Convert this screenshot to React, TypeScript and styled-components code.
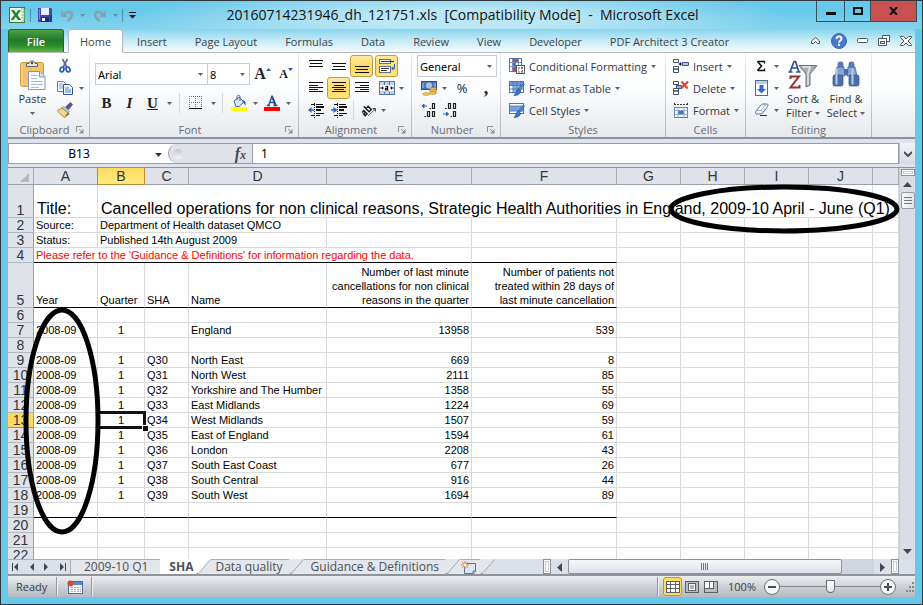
import React from "react";
import styled, { createGlobalStyle, css } from "styled-components";

const UI = '"Open Sans", "Noto Sans", sans-serif';
const TAHOMA = '"Noto Sans", "Open Sans", sans-serif';
const ARIAL = '"Liberation Sans", Arial, sans-serif';

const GlobalStyle = createGlobalStyle`
  *, *::before, *::after { box-sizing: border-box; }
  html, body { margin: 0; padding: 0; }
  body { background: #2d3338; font-family: ${UI}; font-size: 11px; color: #1e1e1e; overflow: hidden; }
  button, input, select { font: inherit; color: inherit; margin: 0; padding: 0; border: 0; background: none; outline: none; }
  button { display: flex; align-items: center; justify-content: center; white-space: nowrap; cursor: default; }
  svg { display: block; flex: none; }
`;

/* ---------- window frame ---------- */

const Window = styled.div`
  display: flex;
  flex-direction: column;
  height: 100vh;
  border: 1px solid #30363b;
  background: #67c9ea;
`;
const TitleBar = styled.header`
  display: grid;
  grid-template-columns: 1fr auto 1fr;
  flex: none;
  height: 28px;
  padding: 0 5px 0 7px;
  background:
    radial-gradient(ellipse 330px 30px at 50% 60%, rgba(200, 235, 247, 0.85) 30%, rgba(200, 235, 247, 0) 100%),
    linear-gradient(#67c9ea 40%, #86d4ee);
`;
const QuickAccess = styled.div`
  display: flex;
  align-items: center;
  height: 28px;
`;
const QuickButton = styled.button<{ $w: number }>`
  width: ${(p) => p.$w}px;
  height: 22px;
`;
const QuickSep = styled.span`
  width: 1px;
  height: 13px;
  margin: 0 4px;
  background: #4f8ea6;
`;
const WindowTitle = styled.h1`
  margin: 0;
  font-size: 14px;
  font-weight: 400;
  line-height: 28px;
  white-space: pre;
  color: #111;
`;
const WindowButtons = styled.div`
  display: flex;
  justify-self: end;
  height: 21px;
`;
const WindowButton = styled.button<{ $w: number; $close?: boolean }>`
  width: ${(p) => p.$w}px;
  border: 1px solid #33505c;
  border-top: 0;
  margin-left: -1px;
  background: ${(p) => (p.$close ? "#c75050" : "transparent")};
`;
const Client = styled.div`
  display: flex;
  flex: 1;
  flex-direction: column;
  min-height: 0;
  margin: 0 7px 7px;
`;

/* ---------- ribbon tabs ---------- */

const TabRow = styled.nav`
  display: flex;
  flex: none;
  height: 24px;
  border-bottom: 1px solid #b6bac0;
  background: linear-gradient(#86d4ee, #c6eaf6 50%, #f4fbfd);
`;
const FileTab = styled.button`
  width: 56px;
  height: 23px;
  margin-right: 4px;
  border: 1px solid #1c6a2a;
  border-bottom: 0;
  border-radius: 3px 3px 0 0;
  background: linear-gradient(#4fa046, #1f7a2c 45%, #2c8a2c 70%, #5cb83c);
  color: #fff;
  font-weight: 600;
`;
const RibbonTab = styled.button<{ $active?: boolean }>`
  height: 24px;
  padding: 0 13px;
  border: 1px solid transparent;
  color: #3f4347;
  ${(p) =>
    p.$active &&
    css`
      padding: 0 11px;
      border-color: #b6bac0;
      border-bottom-color: #fff;
      border-radius: 3px 3px 0 0;
      background: #fff;
    `}
`;
const TabTools = styled.div`
  display: flex;
  align-items: center;
  gap: 10px;
  margin-left: auto;
  padding-right: 3px;
`;

/* ---------- ribbon ---------- */

const Ribbon = styled.section`
  display: flex;
  flex: none;
  height: 86px;
  border-bottom: 2px solid #8d9197;
  background: linear-gradient(#fff, #fbfcfd 45%, #e6e9ed);
`;
const Group = styled.div<{ $w: number }>`
  display: flex;
  flex: none;
  flex-direction: column;
  width: ${(p) => p.$w}px;
  border-right: 1px solid;
  border-image: linear-gradient(#eceef0, #b0b4ba) 1;
`;
const GroupBody = styled.div<{ $pad?: number }>`
  display: flex;
  flex: 1;
  padding: 2px 0 0 ${(p) => p.$pad ?? 0}px;
`;
const GroupLabel = styled.div`
  display: flex;
  align-items: center;
  height: 16px;
  padding: 1px 5px 0;
  color: #696d74;
  span { flex: 1; text-align: center; }
`;
const Stack = styled.div<{ $top?: number; $gap?: number }>`
  display: flex;
  flex-direction: column;
  gap: ${(p) => p.$gap ?? 0}px;
  padding-top: ${(p) => p.$top ?? 0}px;
`;
const ToolRow = styled.div`
  display: flex;
  align-items: center;
  height: 22px;
`;
const Tool = styled.button<{ $w?: number; $on?: boolean }>`
  width: ${(p) => p.$w ?? 23}px;
  height: 22px;
  ${(p) =>
    p.$on &&
    css`
      border: 1px solid #c29b3c;
      border-radius: 3px;
      background: linear-gradient(#fde9a0, #fdd865 60%, #ffe67c);
    `}
`;
const ToolSep = styled.span<{ $mx?: number }>`
  width: 1px;
  height: 20px;
  margin: 0 ${(p) => p.$mx ?? 4}px;
  background: #d3d6da;
`;
const ToolGap = styled.span`
  width: 2px;
`;
const Percent = styled.span`
  font-size: 13px;
`;
const LabelTool = styled.button`
  gap: 4px;
  height: 22px;
  margin-left: -1px;
  color: #33373c;
`;
const BigTool = styled.button<{ $w: number }>`
  flex-direction: column;
  justify-content: flex-start;
  width: ${(p) => p.$w}px;
  padding-top: 2px;
  line-height: 14px;
  color: #33373c;
`;
const BigIcon = styled.span`
  display: flex;
  align-items: center;
  height: 35px;
`;
const LabelLine = styled.span`
  display: flex;
  align-items: center;
  gap: 3px;
  height: 14px;
`;
const Combo = styled.label<{ $w: number }>`
  display: grid;
  width: ${(p) => p.$w}px;
  height: 22px;
  margin-right: -1px;
  border: 1px solid #c9ccd1;
  background: #fff;
  select, svg { grid-area: 1 / 1; }
  select {
    width: 100%;
    padding: 0 14px 0 2px;
    appearance: none;
    color: #000;
    font-family: ${TAHOMA};
  }
  svg { align-self: center; justify-self: end; margin-right: 4px; pointer-events: none; }
`;
const Letter = styled.span<{ $size: number; $style?: "b" | "i" | "u" | "fx" }>`
  font-family: "Liberation Serif", serif;
  font-size: ${(p) => p.$size}px;
  font-weight: 700;
  line-height: 1;
  color: ${(p) => (p.$style === "fx" ? "#44484d" : "#222")};
  font-style: ${(p) => (p.$style === "i" || p.$style === "fx" ? "italic" : "normal")};
  text-decoration: ${(p) => (p.$style === "u" ? "underline" : "none")};
  small { font-size: 12px; }
`;

/* ---------- formula bar ---------- */

const FormulaBar = styled.section`
  display: flex;
  flex: none;
  height: 29px;
  padding: 4px 0 3px;
  background: #dfe3ee;
  border-bottom: 1px solid #8f949c;
`;
const FormulaField = styled.div`
  display: flex;
  flex: 1;
  min-width: 0;
  border: 1px solid #979ba8;
  background: #fff;
`;
const NameInput = styled.input`
  width: 140px;
  text-align: center;
  font-family: ${TAHOMA};
  font-size: 12px;
  color: #000;
`;
const FxPanel = styled.div`
  display: flex;
  align-items: center;
  justify-content: space-between;
  width: 85px;
  padding: 0 6px 0 2px;
  border: solid #979ba8;
  border-width: 0 1px 0 1px;
  border-radius: 10px 0 0 10px;
  background: #dfe3e8;
`;
const Knob = styled.span`
  width: 10px;
  height: 10px;
  margin-left: 2px;
  border-radius: 50%;
  background: linear-gradient(#c3c7cb, #f4f5f6);
`;
const FormulaInput = styled.input`
  flex: 1;
  min-width: 0;
  padding-left: 8px;
  font-family: ${TAHOMA};
  font-size: 12px;
  color: #000;
`;
const ExpandButton = styled.button`
  width: 16px;
  border-left: 1px solid #b9bdc5;
  background: linear-gradient(#f2f4f6, #d8dce2);
`;

/* ---------- sheet ---------- */

const SheetArea = styled.main`
  position: relative;
  display: flex;
  flex: 1;
  min-height: 0;
`;
const GridView = styled.div`
  flex: 1;
  min-width: 0;
  overflow: hidden;
  background: #fff;
`;
const Grid = styled.table`
  width: 100%;
  table-layout: fixed;
  border-collapse: separate;
  border-spacing: 0;
  font-family: ${ARIAL};
  font-size: 11px;
  color: #000;
`;
const ColHead = styled.th<{ $on?: boolean }>`
  height: 17px;
  padding: 0;
  border-right: 1px solid #a9adb4;
  border-bottom: 1px solid #9a9ea6;
  background: #dfe2e8;
  color: #33363b;
  font-size: 14px;
  font-weight: 400;
  line-height: 16px;
  ${(p) =>
    p.$on &&
    css`
      border-color: #c28a30;
      background: linear-gradient(#ffd961, #ffec7f);
      box-shadow: -1px 0 0 #c28a30;
    `}
`;
const Corner = styled.th`
  padding: 0 4px 2px 0;
  border-right: 1px solid #a9adb4;
  border-bottom: 1px solid #9a9ea6;
  background: #dfe2e8;
  vertical-align: bottom;
  svg { margin-left: auto; }
`;
const RowHead = styled.th<{ $h: number; $on?: boolean }>`
  height: ${(p) => p.$h}px;
  padding: 0;
  border-right: 1px solid #9a9ea6;
  border-bottom: 1px solid ${(p) => (p.$on ? "#c28a30" : "#b3b7be")};
  background: ${(p) => (p.$on ? "#ffd85f" : "#dfe2e8")};
  color: #33363b;
  font-size: 14px;
  font-weight: 400;
  line-height: 14px;
  vertical-align: bottom;
`;
const Cell = styled.td<{
  $align?: "left" | "center" | "right";
  $line?: boolean;
  $red?: boolean;
  $big?: boolean;
  $selected?: boolean;
}>`
  padding: 0 2px;
  border-right: 1px solid #d9dadc;
  border-bottom: 1px solid ${(p) => (p.$line ? "#000" : "#d9dadc")};
  text-align: ${(p) => p.$align ?? "left"};
  vertical-align: bottom;
  white-space: pre;
  line-height: ${(p) => (p.$big ? 16 : 14)}px;
  color: ${(p) => (p.$red ? "#f00" : "#000")};
  ${(p) => p.$big && css`padding: 0 3px 0; font-size: 16px;`}
  ${(p) =>
    p.$selected &&
    css`
      position: relative;
      &::before {
        content: "";
        position: absolute;
        inset: -2px -2px -2px -2px;
        border: 3px solid #111;
      }
      &::after {
        content: "";
        position: absolute;
        right: -4px;
        bottom: -4px;
        width: 6px;
        height: 6px;
        border: solid #fff;
        border-width: 1px 0 0 1px;
        background: #111;
      }
    `}
`;
const VScroll = styled.div`
  display: flex;
  flex: none;
  flex-direction: column;
  align-items: center;
  width: 16px;
  padding-top: 1px;
  background: #d9dde5;
  border-left: 1px solid #c9cdd5;
`;
const SplitHandle = styled.span<{ $vertical?: boolean }>`
  flex: none;
  width: ${(p) => (p.$vertical ? 8 : 14)}px;
  height: ${(p) => (p.$vertical ? 15 : 7)}px;
  border: 1px solid #8b8f96;
  background: #fff;
  box-shadow: inset 0 0 0 1px #fff, inset 0 0 0 2px #c7cad0;
`;
const ScrollButton = styled.button`
  flex: none;
  width: 17px;
  height: 16px;
`;
const VThumb = styled.div`
  display: flex;
  align-items: center;
  justify-content: center;
  width: 14px;
  height: 17px;
  margin-bottom: auto;
  border: 1px solid #999da5;
  border-radius: 2px;
  background: linear-gradient(90deg, #f7f8fa, #dfe3e9);
`;
const Annotation = styled.svg`
  position: absolute;
  inset: 0;
  width: 100%;
  height: 100%;
  overflow: visible;
  pointer-events: none;
`;

/* ---------- sheet tabs ---------- */

const BottomRow = styled.div`
  display: flex;
  flex: none;
  height: 17px;
  border-bottom: 2px solid #8f949b;
  background: #dce0e8;
`;
const SheetNav = styled.div`
  display: flex;
  width: 63px;
  border-top: 1px solid #a9adb4;
  border-right: 1px solid #a9adb4;
  button { flex: 1; }
`;
const SheetTab = styled.button<{ $active?: boolean; $padL: number; $padR: number }>`
  padding: 0 ${(p) => p.$padR}px 0 ${(p) => p.$padL}px;
  border-top: 1px solid ${(p) => (p.$active ? "#fff" : "#a9adb4")};
  background: ${(p) => (p.$active ? "#fff" : "#e3e6eb")};
  font-size: 12px;
  line-height: 14px;
  font-weight: ${(p) => (p.$active ? 700 : 400)};
  color: #4c5056;
`;
const HScroll = styled.div`
  display: flex;
  align-items: stretch;
  width: 356px;
  margin: 0 16px 0 auto;
`;
const HTrack = styled.div`
  flex: 1;
  padding-right: 32px;
  background: #cfd4de;
`;
const HThumb = styled.div`
  display: flex;
  align-items: center;
  justify-content: center;
  height: 15px;
  border: 1px solid #8e939b;
  border-radius: 2px;
  background: linear-gradient(#f6f8fa, #dde1e8);
`;

/* ---------- status bar ---------- */

const StatusBar = styled.footer`
  display: flex;
  flex: none;
  align-items: center;
  height: 21px;
  padding-left: 8px;
  background: linear-gradient(#eceef0, #cdd1d6 50%, #b5b9c0);
  color: #3b3f44;
`;
const StatusSep = styled.span`
  width: 2px;
  height: 19px;
  border-left: 1px solid #94989f;
  background: #eceef1;
`;
const StatusItem = styled.span<{ $w: number }>`
  width: ${(p) => p.$w}px;
`;
const ViewButton = styled.button<{ $on?: boolean }>`
  width: 19px;
  height: 19px;
  ${(p) =>
    p.$on &&
    css`
      border: 1px solid #c0942e;
      border-radius: 3px;
      background: #fddc6c;
    `}
`;
const StatusRight = styled.div`
  display: flex;
  align-items: center;
  margin-left: auto;
`;
const ZoomRange = styled.input`
  width: 100px;
  height: 16px;
  appearance: none;
  background: linear-gradient(#83878e, #83878e) center / 100% 1px no-repeat;
  &::-webkit-slider-thumb {
    appearance: none;
    width: 9px;
    height: 13px;
    border: 1px solid #676b72;
    border-radius: 1px 1px 5px 5px;
    background: linear-gradient(#fff, #e2e4e8);
  }
`;

/* ---------- icons ---------- */

const Down = ({ c = "#5e6267", w = 5 }: { c?: string; w?: number }) => (
  <svg width={w} height={w === 5 ? 3 : 4} viewBox="0 0 5 3" aria-hidden="true">
    <path d="M0 0h5L2.5 3z" fill={c} />
  </svg>
);
const Svg = ({ w = 16, h = 16, children }: { w?: number; h?: number; children: React.ReactNode }) => (
  <svg width={w} height={h} viewBox={`0 0 ${w} ${h}`} fill="none" aria-hidden="true">
    {children}
  </svg>
);

const ExcelIcon = () => (
  <Svg>
    <rect x=".5" y=".5" width="15" height="15" fill="#f3faf0" stroke="#2c8338" />
    <path d="M12 2h3v12h-3M12 5h3M12 8h3M12 11h3" stroke="#8cc48d" />
    <path d="M2 3h3l2 3.2L9.400 3H12L8.600 8l3.600 5H9L6.800 9.700 4.400 13H1.500L5.300 8z" fill="#218235" />
  </Svg>
);
const SaveIcon = () => (
  <Svg w={14} h={14}>
    <path d="M0 0h13l1 1v13H0z" fill="#4348b4" />
    <rect x="3" y="0" width="8" height="7" fill="#e8effa" />
    <rect x="1" y="1" width="1" height="10" fill="#7e86d8" />
    <rect x="3" y="9" width="8" height="5" fill="#23286f" />
    <rect x="4" y="10" width="3" height="3" fill="#fff" />
    <rect x="12" y="7" width="2" height="7" fill="#2e3384" />
  </Svg>
);
const UndoIcon = ({ flip }: { flip?: boolean }) => (
  <Svg w={13} h={13}>
    <g transform={flip ? "matrix(-1 0 0 1 13 0)" : undefined}>
      <path d="M3 5.500C6 1.500 11 2.200 11 6c0 2.500-2 4-4.500 6" stroke="#85a3b1" strokeWidth="2.600" />
      <path d="M0 1v7h7z" fill="#85a3b1" />
    </g>
  </Svg>
);
const CustomizeIcon = () => (
  <Svg w={7} h={7}>
    <path d="M0 .5h7" stroke="#111" />
    <path d="M0 3h7L3.500 6.500z" fill="#111" />
  </Svg>
);
const PasteIcon = () => (
  <Svg w={28} h={32}>
    <rect x="1.500" y="3.500" width="23" height="24" rx="2" fill="#f3c168" stroke="#cf9a45" />
    <path d="M3 5v21" stroke="#f9dda2" />
    <path d="M7.500 4.500h2.500C10 1 16 1 16 4.500h2.500v3h-11z" fill="#e2e4e8" stroke="#5f646b" />
    <circle cx="13" cy="4" r="1.200" fill="#4b5057" />
    <path d="M9.500 12.500H21l5 5V30.500H9.500z" fill="#fdfeff" stroke="#8795ad" />
    <path d="M20.500 12.500v5.500H26" fill="#d6e0f0" stroke="#8795ad" />
    <path d="M12 16.500h7M12 19.500h6M12 22.500h12M12 25.500h12M12 28.500h8" stroke="#a5bad8" />
  </Svg>
);
const CutIcon = () => (
  <Svg>
    <path d="M5.500 1l4.500 8.500M10.500 1L6 9.500" stroke="#5c6f91" strokeWidth="1.700" />
    <ellipse cx="5" cy="11.500" rx="1.900" ry="2.500" stroke="#2b5fb8" strokeWidth="1.700" transform="rotate(20 5 11.500)" />
    <ellipse cx="11" cy="11.500" rx="1.900" ry="2.500" stroke="#2b5fb8" strokeWidth="1.700" transform="rotate(-20 11 11.500)" />
  </Svg>
);
const CopyIcon = () => (
  <Svg>
    <path d="M.500 1.500h6l2 2v8h-8z" fill="#f4f8ff" stroke="#5d80bb" />
    <path d="M2 4h4M2 6h5M2 8h5" stroke="#7c9fd6" />
    <path d="M6.500 4.500h6l3 3v7H6.500z" fill="#f4f8ff" stroke="#2f5599" />
    <path d="M8 8h4M8 10h6M8 12h6" stroke="#4d7cc4" />
  </Svg>
);
const PainterIcon = () => (
  <Svg>
    <path d="M13.500.500l2 2-4 5-3-2.500z" fill="#5a4f9c" stroke="#3b3575" strokeWidth=".6" />
    <path d="M6.500 4.500l6 5-1.500 1.500-6-5z" fill="#c9ccd6" stroke="#6b6f7c" strokeWidth=".6" />
    <path d="M5 6l6 5-3 4.500C5 14 2 11.500.500 8.500z" fill="#f2da84" stroke="#8a6a1c" strokeWidth=".7" />
    <path d="M8 15l3-4 1.500 1z" fill="#6a4c12" />
  </Svg>
);
const LauncherIcon = () => (
  <Svg w={8} h={8}>
    <path d="M.500 6V.500H6" stroke="#8b8f96" />
    <path d="M3 3l3 3" stroke="#8b8f96" />
    <path d="M7.500 3v4.500H3z" fill="#8b8f96" />
  </Svg>
);
const SizeMark = ({ up }: { up?: boolean }) => (
  <Svg w={5} h={15}>
    <path d={up ? "M0 4h5L2.500 1z" : "M0 1h5L2.500 4z"} fill="#2b5aa5" />
  </Svg>
);
const BorderIcon = () => (
  <Svg w={14} h={14}>
    <path d="M0 .500h13M0 6.500h13M.500 0v12M6.500 0v12M12.500 0v12" stroke="#6b6f75" strokeDasharray="1 1" />
    <path d="M0 12.500h13" stroke="#111" />
  </Svg>
);
const FillIcon = () => (
  <Svg w={16} h={16}>
    <path d="M3 6l5-4 5 5-5 4.500H5z" fill="#dbe6f5" stroke="#46648f" />
    <path d="M6 5V1.500C6 0 9 0 9 1.500V6" stroke="#46648f" />
    <path d="M12 5c2.500.500 3 2.500 2.500 6-1-2.500-2-3-3-3z" fill="#2c66b8" />
    <rect y="12" width="16" height="4" fill="#ff0" />
  </Svg>
);
const FontColorIcon = () => (
  <Svg w={16} h={16}>
    <path d="M3 10.500h3M9.500 10.500h4M4.500 10.500L8 1.500l4 9M5.500 7.500h5" stroke="#2f4f8c" strokeWidth="1.400" />
    <path d="M8 1l3.500 9.500" stroke="#2f4f8c" strokeWidth="2" />
    <rect y="12" width="16" height="4" fill="#f00" />
  </Svg>
);
const LinesIcon = ({ rows }: { rows: [number, number][] }) => (
  <Svg w={16} h={16}>
    {rows.map(([x, w], i) => (
      <rect key={i} x={x} y={2 + i * 2 + (i > 0 ? 1 : 0)} width={w} height="1" fill="#111" />
    ))}
  </Svg>
);
const VAlignIcon = ({ y }: { y: number }) => (
  <Svg w={16} h={16}>
    <path d={`M1 ${y}.5h14M2 ${y + 3}.5h12M1 ${y + 6}.5h14`} stroke="#111" />
  </Svg>
);
const WrapIcon = () => (
  <Svg w={18} h={18}>
    <rect x="1.500" y="2.500" width="11" height="4" fill="#fff" stroke="#5a7398" />
    <path d="M3 4.500h13" stroke="#333" />
    <rect x="1.500" y="9.500" width="11" height="6" fill="#fff" stroke="#5a7398" />
    <path d="M3 11.500h8M3 13.500h6" stroke="#333" />
    <path d="M16.500 7v4.500h-2" stroke="#2a66c0" />
    <path d="M15.500 9.500v4l-2.500-2z" fill="#2a66c0" />
  </Svg>
);
const MergeIcon = () => (
  <Svg>
    <rect x=".5" y="1.500" width="15" height="13" fill="#bdd3ef" stroke="#5675a4" />
    <path d="M5.500 2v3M10.500 2v3M5.500 12v3M10.500 12v3" stroke="#5675a4" />
    <rect x="1" y="5" width="14" height="6" fill="#fff" />
    <path d="M1 8h3M12 8h3" stroke="#222" />
    <path d="M3 6l2 2-2 2zM13 6l-2 2 2 2z" fill="#222" />
    <path d="M6.500 6.500h2v3.500h-2V8.300h2M9.500 10h-1" stroke="#111" strokeWidth="1.200" />
  </Svg>
);
const IndentIcon = ({ right }: { right?: boolean }) => (
  <Svg>
    <path d="M3 2.500h4M8 2.500h7M8 5.500h8M8 8.500h5M8 11.500h8M3 13.500h4M8 13.500h4" stroke="#111" />
    <path d="M8 4.500h8M8 7.500h5" stroke="#111" />
    <path d="M6.500 1v15" stroke="#111" strokeDasharray="1 1" />
    <path d={right ? "M0 8h4" : "M2 8h4"} stroke="#2a66c0" strokeWidth="1.500" />
    <path d={right ? "M2.500 5l4 3-4 3z" : "M3.500 5L0 8l3.500 3z"} fill="#2a66c0" />
  </Svg>
);
const OrientIcon = () => (
  <Svg w={16} h={14}>
    <g transform="rotate(-45 6 8)">
      <path d="M1.500 5.500h2.500V10H1.500V7.700H4M7 2.500V10h3V5.500H7" stroke="#222" strokeWidth="1.500" />
    </g>
    <path d="M7 13l6-6" stroke="#777" />
    <path d="M15 5v4l-4-4z" fill="#555" />
  </Svg>
);
const CurrencyIcon = () => (
  <Svg>
    <rect x=".5" y="1.500" width="15" height="8" fill="#4a77b8" stroke="#2c4f86" />
    <ellipse cx="8" cy="5.500" rx="3" ry="3" fill="#a9c5ea" />
    <path d="M2 3v5M14 3v5" stroke="#a9c5ea" />
    <ellipse cx="12" cy="9" rx="3.500" ry="1.300" fill="#f6cf62" stroke="#a5751a" strokeWidth=".6" />
    <ellipse cx="12" cy="11" rx="3.500" ry="1.300" fill="#f6cf62" stroke="#a5751a" strokeWidth=".6" />
    <ellipse cx="12" cy="13" rx="3.500" ry="1.300" fill="#f6cf62" stroke="#a5751a" strokeWidth=".6" />
    <ellipse cx="5" cy="14" rx="3.500" ry="1.300" fill="#f6cf62" stroke="#a5751a" strokeWidth=".6" />
  </Svg>
);
const DecimalIcon = ({ less }: { less?: boolean }) => (
  <Svg>
    <g stroke="#222" strokeWidth="1.200">
      {less ? (
        <>
          <path d="M2 6.500h1.500M5.500 1.500h2v5h-2zM10.500 1.500h2v5h-2z" />
          <path d="M7.500 14.500H9M10.500 9.500h2v5h-2z" />
        </>
      ) : (
        <>
          <path d="M8.500 6.500H10M11.500 1.500h2v5h-2z" />
          <path d="M3.500 14.500H5M6.500 9.500h2v5h-2zM11.500 9.500h2v5h-2z" />
        </>
      )}
    </g>
    {less ? (
      <path d="M0 12h4M3.500 10L5.500 12l-2 2z" fill="#2a66c0" stroke="#2a66c0" />
    ) : (
      <path d="M6 4H3M3 2L1 4l2 2z" fill="#2a66c0" stroke="#2a66c0" />
    )}
  </Svg>
);
const CondFormatIcon = () => (
  <Svg>
    <rect x=".5" y=".5" width="12" height="13" fill="#fff" stroke="#4f76b3" />
    <rect x="4" y="1" width="5" height="3" fill="#d9442f" />
    <rect x="4" y="5" width="3" height="3" fill="#4c7ac0" />
    <rect x="4" y="9" width="4" height="4" fill="#d9442f" />
    <path d="M1 4.500h11M1 8.500h8M3.500 1v12M9.500 1v6" stroke="#6d90c6" />
    <rect x="7.500" y="7.500" width="8" height="8" fill="#fff" stroke="#555" />
    <path d="M9 10h2M9 12h1M9 14h2M12 9l2 1-2 1M14 12l-2 2h2" stroke="#333" strokeWidth=".8" />
  </Svg>
);
const Brush = () => (
  <>
    <path d="M15.500 4l-4 6-2-1.500L14.500 3.500z" fill="#5b8bd0" stroke="#2e5a9c" strokeWidth=".7" />
    <path d="M9 9l2.500 2c-.500 3.500-3 4.500-6.500 4.500C7 14 7 10.500 9 9z" fill="#3c76cc" stroke="#234f92" strokeWidth=".7" />
  </>
);
const TableFormatIcon = () => (
  <Svg>
    <rect x=".5" y="1.500" width="14" height="11" fill="#fff" stroke="#4f76b3" />
    <rect x="4" y="5" width="7" height="7" fill="#8fb4e8" />
    <rect x="1" y="2" width="13" height="3" fill="#6d98d8" />
    <path d="M.500 5.500h14M.500 9h14M4 2v11M8 2v11M11.500 2v11" stroke="#4f76b3" strokeWidth=".9" />
    <Brush />
  </Svg>
);
const CellStyleIcon = () => (
  <Svg>
    <rect x=".5" y="1.500" width="14" height="10" fill="#fff" stroke="#4f76b3" />
    <rect x="1" y="4" width="13" height="5" fill="#77a0e0" />
    <path d="M.500 4h14M.500 9h14" stroke="#4f76b3" strokeWidth=".9" />
    <Brush />
  </Svg>
);
const InsertCellsIcon = ({ del }: { del?: boolean }) => (
  <Svg>
    <path d="M.500 1.500h5v3h-5zM.500 8.500h5v2.500h-5zM.500 11h5v3.500h-5z" fill="#fff" stroke="#3f4f6b" />
    {del ? (
      <>
        <path d="M3.500 5.500h5v3h-5z" fill="#8fb4e8" stroke="#3f4f6b" />
        <path d="M8.500 1.500l6 7M15 1.500l-7 7" stroke="#e2432c" strokeWidth="2" />
      </>
    ) : (
      <>
        <path d="M9.500 4.500h6v3h-6z" fill="#a9c7f0" stroke="#33548c" />
        <path d="M7 6h2" stroke="#111" />
        <path d="M8 4v4L5.500 6z" fill="#111" />
      </>
    )}
  </Svg>
);
const FormatCellsIcon = () => (
  <Svg>
    <path d="M1 2.500h14M1.500 1v3M14.500 1v3" stroke="#333" strokeDasharray="2 1" />
    <rect x="1.500" y="5.500" width="13" height="10" fill="#fff" stroke="#5a7fba" />
    <rect x="5" y="8" width="6" height="4" fill="#3f74c4" />
    <path d="M1 8.500h14M1 12.500h14M5 5v10M11 5v10" stroke="#8aa9d8" />
  </Svg>
);
const SigmaIcon = () => (
  <Svg w={11} h={12}>
    <path d="M1.500 1.500h7v2M1.500 10.500h7v-2" stroke="#111" strokeWidth="1.300" />
    <path d="M1.500 1.500l4 4.500-4 4.500" stroke="#111" strokeWidth="1.600" />
  </Svg>
);
const FillDownIcon = () => (
  <Svg w={13} h={16}>
    <rect x=".5" y=".5" width="12" height="15" fill="#fff" stroke="#55698c" />
    <rect x="1" y="1" width="11" height="3" fill="#b7cdee" />
    <path d="M4.500 5h4v4H11l-4.500 4.500L2 9h2.500z" fill="#2f6bd0" />
  </Svg>
);
const EraserIcon = () => (
  <Svg w={16} h={14}>
    <path d="M6.500 2.500C7 1.500 8 1 9 1h3.500c1.500 0 2 1 1 2.500L9 9.500c-.800 1-1.500 1.500-3 1.500H3C1.500 11 1 9.500 2 8z" fill="#fafbff" stroke="#4f6fa8" />
    <path d="M2.500 7.500h4.500c1 0 1.500 1 1 2.500M7 7.500l5-6" stroke="#9db3dc" />
    <path d="M6 12.500h7" stroke="#333" />
  </Svg>
);
const SortIcon = () => (
  <Svg w={30} h={30}>
    <path d="M2 12L6 1.500h1.500L11 12M4 8h6M.500 12h4M8 12h4.500" stroke="#2c5296" strokeWidth="1.700" />
    <path d="M2.500 19v-2.500H11L2.500 27.500h9V25" stroke="#9b2c2c" strokeWidth="2" />
    <path d="M11 5.500h18l-7 8.500v11l-4 2V14z" fill="#a9adb3" stroke="#6c7076" />
    <path d="M14 7h8l-2 6v12" stroke="#e8eaec" strokeWidth="1.500" />
  </Svg>
);
const FindIcon = () => (
  <Svg w={28} h={28}>
    <rect x="6" y="1" width="5" height="6" rx="2" fill="#5d7fb5" stroke="#34548c" strokeWidth=".7" />
    <rect x="17" y="1" width="5" height="6" rx="2" fill="#5d7fb5" stroke="#34548c" strokeWidth=".7" />
    <path d="M5 6h7l1 9H3z" fill="#86a5d3" stroke="#34548c" strokeWidth=".7" />
    <path d="M16 6h7l2 9H15z" fill="#86a5d3" stroke="#34548c" strokeWidth=".7" />
    <rect x="12" y="8" width="4" height="6" fill="#4c70ad" />
    <rect x="1" y="14" width="10" height="11" rx="2" fill="#4c70ad" stroke="#2c4a80" strokeWidth=".7" />
    <rect x="17" y="14" width="10" height="11" rx="2" fill="#4c70ad" stroke="#2c4a80" strokeWidth=".7" />
    <path d="M4.500 7.500v16M20.500 7.500v16" stroke="#b9cdeb" strokeWidth="2" />
  </Svg>
);
const CollapseIcon = () => (
  <Svg w={11} h={9}>
    <path d="M1.500 5l4-3.500 4 3.500v2.500h-2l-2-2-2 2h-2z" fill="#fff" stroke="#50565c" />
  </Svg>
);
const HelpIcon = () => (
  <Svg>
    <circle cx="8" cy="8" r="7.500" fill="#4a78cb" stroke="#3c65b0" />
    <path d="M5.500 6c0-3.500 5-3.300 5-.300C10.500 7.500 8 7.500 8 9.800" stroke="#fff" strokeWidth="1.800" />
    <rect x="7" y="11" width="2" height="2" fill="#fff" />
  </Svg>
);
const MinIcon = () => (
  <Svg w={11} h={5}>
    <rect x=".5" y=".5" width="10" height="4" rx="1" fill="#fff" stroke="#50565c" />
  </Svg>
);
const RestoreIcon = () => (
  <Svg w={12} h={11}>
    <path d="M4.500.500h7v6h-3v-3h-4z" fill="#fff" stroke="#50565c" />
    <path d="M.500 3.500h8v7h-8z" fill="#fff" stroke="#50565c" />
    <rect x="2.500" y="6.500" width="4" height="2" stroke="#50565c" />
  </Svg>
);
const CloseIcon = () => (
  <Svg w={12} h={10}>
    <path d="M.500.500h3L6 3l2.500-2.500h3v1L8 5l3.500 3.500v1h-3L6 7 3.500 9.500h-3v-1L4 5 .500 1.500z" fill="#fff" stroke="#50565c" />
  </Svg>
);
const NavIcon = ({ d, bar }: { d: "l" | "r"; bar?: boolean }) => (
  <Svg w={7} h={8}>
    <path d={d === "l" ? "M6 0v8L2 4z" : "M1 0v8l4-4z"} fill="#43474d" />
    {bar && <path d={d === "l" ? "M.500 0v8" : "M6.500 0v8"} stroke="#43474d" />}
  </Svg>
);
const ScrollArrow = ({ d }: { d: "l" | "r" | "u" | "d" }) => {
  const paths = { l: "M5 0v9L0 4.500z", r: "M0 0v9l5-4.500z", u: "M0 5h9L4.500 0z", d: "M0 0h9L4.500 5z" };
  const side = d === "l" || d === "r";
  return (
    <Svg w={side ? 5 : 9} h={side ? 9 : 5}>
      <path d={paths[d]} fill="#43474d" />
    </Svg>
  );
};
const Slant = ({ l, r }: { l: string; r: string }) => (
  <Svg w={15} h={15}>
    <path d="M0 0h15L3 15H0z" fill={l} />
    <path d="M15 0v15H3z" fill={r} />
    <path d="M14.500.500L2 15" stroke="#a2a6ad" />
    <path d="M0 15l2-2v2z" fill="#a2a6ad" />
  </Svg>
);
const NewSheetIcon = () => (
  <Svg w={16} h={13}>
    <path d="M3.500 2.500h11v8l-2 2h-9z" fill="#dbe7f8" stroke="#5674a8" />
    <path d="M14 10h-2v3" stroke="#5674a8" />
    <path d="M4 0v8M0 4h8M1.200 1.200l5.600 5.600M6.800 1.200L1.200 6.800" stroke="#d98a20" />
    <circle cx="4" cy="4" r="1.400" fill="#fff" />
  </Svg>
);
const MacroIcon = () => (
  <Svg w={16} h={14}>
    <rect x="1.500" y="1.500" width="14" height="12" fill="#fff" stroke="#4a6ba6" />
    <rect x="2" y="2" width="13" height="3" fill="#5d87cc" />
    <path d="M4 7.500h10M4 9.500h10M4 11.500h10" stroke="#8ea9d2" strokeDasharray="2 1" />
    <circle cx="3.500" cy="3.500" r="3" fill="#d8492c" />
  </Svg>
);
const ViewIcon = ({ kind }: { kind: "grid" | "page" | "break" }) => (
  <Svg w={14} h={12}>
    <rect x=".5" y=".5" width="13" height="11" fill={kind === "grid" ? "#fff" : "#b9bcc1"} stroke="#5b5f65" />
    {kind === "grid" && <path d="M1 3.500h12M1 7.500h12M4.500 1v10M9.500 1v10" stroke="#5b5f65" />}
    {kind === "page" && (
      <>
        <rect x="3.500" y="2.500" width="7" height="7" fill="#fff" stroke="#5b5f65" />
        <path d="M5 5h4M5 7h4" stroke="#5b5f65" />
      </>
    )}
    {kind === "break" && (
      <>
        <path d="M1 1h4v6H1zM6 1h3v6H6z" fill="#fff" />
        <path d="M5.500 1v6M9.500 1v6M1 7.500h9" stroke="#5b5f65" />
      </>
    )}
  </Svg>
);
const RoundIcon = ({ plus }: { plus?: boolean }) => (
  <Svg>
    <circle cx="8" cy="8" r="7.500" fill="#f4f5f6" stroke="#6b6f76" />
    <path d={plus ? "M4 8h8M8 4v8" : "M4 8h8"} stroke="#4a4e54" strokeWidth="2" />
  </Svg>
);

/* ---------- data ---------- */

type Row = { n: number; year?: string; q?: string; sha?: string; name?: string; a?: string; b?: string };
const rows: Row[] = [
  { n: 6 },
  { n: 7, year: "2008-09", q: "1", name: "England", a: "13958", b: "539" },
  { n: 8 },
  { n: 9, year: "2008-09", q: "1", sha: "Q30", name: "North East", a: "669", b: "8" },
  { n: 10, year: "2008-09", q: "1", sha: "Q31", name: "North West", a: "2111", b: "85" },
  { n: 11, year: "2008-09", q: "1", sha: "Q32", name: "Yorkshire and The Humber", a: "1358", b: "55" },
  { n: 12, year: "2008-09", q: "1", sha: "Q33", name: "East Midlands", a: "1224", b: "69" },
  { n: 13, year: "2008-09", q: "1", sha: "Q34", name: "West Midlands", a: "1507", b: "59" },
  { n: 14, year: "2008-09", q: "1", sha: "Q35", name: "East of England", a: "1594", b: "61" },
  { n: 15, year: "2008-09", q: "1", sha: "Q36", name: "London", a: "2208", b: "43" },
  { n: 16, year: "2008-09", q: "1", sha: "Q37", name: "South East Coast", a: "677", b: "26" },
  { n: 17, year: "2008-09", q: "1", sha: "Q38", name: "South Central", a: "916", b: "44" },
  { n: 18, year: "2008-09", q: "1", sha: "Q39", name: "South West", a: "1694", b: "89" },
  { n: 19 },
  { n: 20 },
  { n: 21 },
  { n: 22 },
];
const columns = ["A", "B", "C", "D", "E", "F", "G", "H", "I", "J"];
const widths = [26, 64, 47, 44, 138, 145, 145, 64, 64, 64, 64];
const tabs = ["Home", "Insert", "Page Layout", "Formulas", "Data", "Review", "View", "Developer", "PDF Architect 3 Creator"];
const Blank = ({ count }: { count: number }) => (
  <>
    {Array.from({ length: count }, (_, i) => (
      <Cell key={i} />
    ))}
  </>
);

const Label = ({ text, launcher }: { text: string; launcher?: boolean }) => (
  <GroupLabel>
    <span>{text}</span>
    {launcher && (
      <button aria-label={`${text} options`}>
        <LauncherIcon />
      </button>
    )}
  </GroupLabel>
);
const Menu = ({ icon, text }: { icon: React.ReactNode; text: string }) => (
  <LabelTool>
    {icon}
    {text}
    <Down />
  </LabelTool>
);

/* ---------- app ---------- */

const RibbonBar = () => (
  <Ribbon>
    <Group $w={82}>
      <GroupBody $pad={6}>
        <BigTool $w={37}>
          <BigIcon>
            <PasteIcon />
          </BigIcon>
          <LabelLine>Paste</LabelLine>
          <LabelLine>
            <Down />
          </LabelLine>
        </BigTool>
        <Stack>
          <ToolRow>
            <Tool $w={28} aria-label="Cut"><CutIcon /></Tool>
          </ToolRow>
          <ToolRow>
            <Tool $w={28} aria-label="Copy"><CopyIcon /></Tool>
            <Tool $w={5} aria-label="Copy options"><Down /></Tool>
          </ToolRow>
          <ToolRow>
            <Tool $w={28} aria-label="Format Painter"><PainterIcon /></Tool>
          </ToolRow>
        </Stack>
      </GroupBody>
      <Label text="Clipboard" launcher />
    </Group>

    <Group $w={209}>
      <GroupBody $pad={5}>
        <Stack $top={8} $gap={7}>
          <ToolRow>
            <Combo $w={113}>
              <select aria-label="Font"><option>Arial</option></select>
              <Down />
            </Combo>
            <Combo $w={43}>
              <select aria-label="Font size"><option>8</option></select>
              <Down />
            </Combo>
            <Tool $w={27} aria-label="Grow Font"><Letter $size={16}>A</Letter><SizeMark up /></Tool>
            <Tool $w={20} aria-label="Shrink Font"><Letter $size={12}>A</Letter><SizeMark /></Tool>
          </ToolRow>
          <ToolRow>
            <Tool aria-label="Bold"><Letter $size={15}>B</Letter></Tool>
            <Tool aria-label="Italic"><Letter $size={15} $style="i">I</Letter></Tool>
            <Tool aria-label="Underline"><Letter $size={15} $style="u">U</Letter></Tool>
            <Tool $w={11} aria-label="Underline options"><Down /></Tool>
            <ToolSep />
            <Tool $w={24} aria-label="Borders"><BorderIcon /></Tool>
            <Tool $w={10} aria-label="Border options"><Down /></Tool>
            <ToolSep />
            <Tool $w={24} aria-label="Fill Color"><FillIcon /></Tool>
            <Tool $w={9} aria-label="Fill options"><Down /></Tool>
            <Tool $w={24} aria-label="Font Color"><FontColorIcon /></Tool>
            <Tool $w={9} aria-label="Font color options"><Down /></Tool>
          </ToolRow>
        </Stack>
      </GroupBody>
      <Label text="Font" launcher />
    </Group>

    <Group $w={113}>
      <GroupBody $pad={5}>
        <Stack>
          <ToolRow>
            <Tool aria-label="Top Align"><VAlignIcon y={2} /></Tool>
            <Tool aria-label="Middle Align"><VAlignIcon y={5} /></Tool>
            <Tool $on aria-label="Bottom Align"><VAlignIcon y={8} /></Tool>
            <ToolGap />
            <Tool $on aria-label="Wrap Text"><WrapIcon /></Tool>
          </ToolRow>
          <ToolRow>
            <Tool aria-label="Align Left"><LinesIcon rows={[[1, 14], [1, 9], [1, 14], [1, 9], [1, 14]]} /></Tool>
            <Tool $on aria-label="Center"><LinesIcon rows={[[1, 14], [3, 10], [1, 14], [3, 10], [1, 14]]} /></Tool>
            <Tool aria-label="Align Right"><LinesIcon rows={[[1, 14], [6, 9], [1, 14], [6, 9], [1, 14]]} /></Tool>
            <ToolGap />
            <Tool aria-label="Merge and Center"><MergeIcon /></Tool>
            <Tool $w={7} aria-label="Merge options"><Down /></Tool>
          </ToolRow>
          <ToolRow>
            <Tool aria-label="Decrease Indent"><IndentIcon /></Tool>
            <Tool aria-label="Increase Indent"><IndentIcon right /></Tool>
            <ToolSep $mx={3} />
            <Tool aria-label="Orientation"><OrientIcon /></Tool>
            <Tool $w={7} aria-label="Orientation options"><Down /></Tool>
          </ToolRow>
        </Stack>
      </GroupBody>
      <Label text="Alignment" launcher />
    </Group>

    <Group $w={89}>
      <GroupBody $pad={5}>
        <Stack>
          <ToolRow>
            <Combo $w={80}>
              <select aria-label="Number format"><option>General</option></select>
              <Down />
            </Combo>
          </ToolRow>
          <ToolRow>
            <Tool $w={24} aria-label="Accounting format"><CurrencyIcon /></Tool>
            <Tool $w={7} aria-label="Currency options"><Down /></Tool>
            <Tool $w={28} aria-label="Percent"><Percent>%</Percent></Tool>
            <Tool $w={20} aria-label="Comma Style"><Letter $size={18}>,</Letter></Tool>
          </ToolRow>
          <ToolRow>
            <Tool $w={24} aria-label="Increase Decimal"><DecimalIcon /></Tool>
            <Tool $w={20} aria-label="Decrease Decimal"><DecimalIcon less /></Tool>
          </ToolRow>
        </Stack>
      </GroupBody>
      <Label text="Number" launcher />
    </Group>

    <Group $w={165}>
      <GroupBody $pad={9}>
        <Stack>
          <ToolRow><Menu icon={<CondFormatIcon />} text="Conditional Formatting" /></ToolRow>
          <ToolRow><Menu icon={<TableFormatIcon />} text="Format as Table" /></ToolRow>
          <ToolRow><Menu icon={<CellStyleIcon />} text="Cell Styles" /></ToolRow>
        </Stack>
      </GroupBody>
      <Label text="Styles" />
    </Group>

    <Group $w={80}>
      <GroupBody $pad={8}>
        <Stack>
          <ToolRow><Menu icon={<InsertCellsIcon />} text="Insert" /></ToolRow>
          <ToolRow><Menu icon={<InsertCellsIcon del />} text="Delete" /></ToolRow>
          <ToolRow><Menu icon={<FormatCellsIcon />} text="Format" /></ToolRow>
        </Stack>
      </GroupBody>
      <Label text="Cells" />
    </Group>

    <Group $w={126}>
      <GroupBody $pad={4}>
        <Stack>
          <ToolRow>
            <Tool aria-label="AutoSum"><SigmaIcon /></Tool>
            <Tool $w={7} aria-label="AutoSum options"><Down /></Tool>
          </ToolRow>
          <ToolRow>
            <Tool aria-label="Fill"><FillDownIcon /></Tool>
            <Tool $w={7} aria-label="Fill options"><Down /></Tool>
          </ToolRow>
          <ToolRow>
            <Tool aria-label="Clear"><EraserIcon /></Tool>
            <Tool $w={7} aria-label="Clear options"><Down /></Tool>
          </ToolRow>
        </Stack>
        <BigTool $w={46}>
          <BigIcon><SortIcon /></BigIcon>
          <LabelLine>Sort &amp;</LabelLine>
          <LabelLine>Filter <Down /></LabelLine>
        </BigTool>
        <BigTool $w={40}>
          <BigIcon><FindIcon /></BigIcon>
          <LabelLine>Find &amp;</LabelLine>
          <LabelLine>Select <Down /></LabelLine>
        </BigTool>
      </GroupBody>
      <Label text="Editing" />
    </Group>
  </Ribbon>
);

const Sheet = () => (
  <SheetArea>
    <GridView>
      <Grid>
        <colgroup>
          {widths.map((w, i) => (
            <col key={i} width={w} />
          ))}
          <col />
        </colgroup>
        <thead>
          <tr>
            <Corner aria-label="Select all">
              <Svg w={9} h={9}>
                <path d="M9 0v9H0z" fill="#b3b7be" />
              </Svg>
            </Corner>
            {columns.map((c) => (
              <ColHead key={c} $on={c === "B"}>{c}</ColHead>
            ))}
            <ColHead />
          </tr>
        </thead>
        <tbody>
          <tr>
            <RowHead $h={33}>1</RowHead>
            <Cell $big>Title:</Cell>
            <Cell $big colSpan={9}>
              Cancelled operations for non clinical reasons, Strategic Health Authorities in England, 2009-10 April - June (Q1)
            </Cell>
            <Cell />
          </tr>
          <tr>
            <RowHead $h={15}>2</RowHead>
            <Cell>Source:</Cell>
            <Cell colSpan={3}>Department of Health dataset QMCO</Cell>
            <Blank count={7} />
          </tr>
          <tr>
            <RowHead $h={15}>3</RowHead>
            <Cell>Status:</Cell>
            <Cell colSpan={3}>Published 14th August 2009</Cell>
            <Blank count={7} />
          </tr>
          <tr>
            <RowHead $h={15}>4</RowHead>
            <Cell $red $line colSpan={5}>
              Please refer to the 'Guidance &amp; Definitions' for information regarding the data.
            </Cell>
            <Cell $line />
            <Blank count={5} />
          </tr>
          <tr>
            <RowHead $h={45}>5</RowHead>
            <Cell $line>Year</Cell>
            <Cell $line>Quarter</Cell>
            <Cell $line>SHA</Cell>
            <Cell $line>Name</Cell>
            <Cell $line $align="right">
              {"Number of last minute\ncancellations for non clinical\nreasons in the quarter"}
            </Cell>
            <Cell $line $align="right">
              {"Number of patients not\ntreated within 28 days of\nlast minute cancellation"}
            </Cell>
            <Blank count={5} />
          </tr>
          {rows.map((r) => {
            const line = r.n === 19;
            return (
              <tr key={r.n}>
                <RowHead $h={15} $on={r.n === 13}>{r.n}</RowHead>
                <Cell $line={line}>{r.year}</Cell>
                <Cell $line={line} $align="center" $selected={r.n === 13}>{r.q}</Cell>
                <Cell $line={line}>{r.sha}</Cell>
                <Cell $line={line}>{r.name}</Cell>
                <Cell $line={line} $align="right">{r.a}</Cell>
                <Cell $line={line} $align="right">{r.b}</Cell>
                <Blank count={5} />
              </tr>
            );
          })}
        </tbody>
      </Grid>
    </GridView>
    <VScroll>
      <SplitHandle />
      <ScrollButton aria-label="Scroll up">
        <ScrollArrow d="u" />
      </ScrollButton>
      <VThumb>
        <Svg w={8} h={8}><path d="M0 .5h8M0 3.500h8M0 6.500h8" stroke="#70747b" /></Svg>
      </VThumb>
      <ScrollButton aria-label="Scroll down">
        <ScrollArrow d="d" />
      </ScrollButton>
    </VScroll>
    <Annotation aria-hidden="true" fill="none" stroke="#000" strokeWidth="5">
      <ellipse cx="776" cy="41" rx="113" ry="22" />
      <ellipse cx="54" cy="253" rx="36" ry="111" />
    </Annotation>
  </SheetArea>
);

export default function App() {
  return (
    <Window>
      <GlobalStyle />
      <TitleBar>
        <QuickAccess>
          <QuickButton $w={18} aria-label="Excel"><ExcelIcon /></QuickButton>
          <QuickSep />
          <QuickButton $w={20} aria-label="Save"><SaveIcon /></QuickButton>
          <QuickButton $w={24} aria-label="Undo"><UndoIcon /></QuickButton>
          <QuickButton $w={7} aria-label="Undo options"><Down c="#5f93a8" /></QuickButton>
          <QuickButton $w={26} aria-label="Redo"><UndoIcon flip /></QuickButton>
          <QuickButton $w={6} aria-label="Redo options"><Down c="#5f93a8" /></QuickButton>
          <QuickSep />
          <QuickButton $w={10} aria-label="Customize toolbar"><CustomizeIcon /></QuickButton>
        </QuickAccess>
        <WindowTitle>{"20160714231946_dh_121751.xls  [Compatibility Mode]  -  Microsoft Excel"}</WindowTitle>
        <WindowButtons>
          <WindowButton $w={29} aria-label="Minimize">
            <Svg w={10} h={10}><path d="M0 7.500h10" stroke="#111" strokeWidth="3" /></Svg>
          </WindowButton>
          <WindowButton $w={27} aria-label="Maximize">
            <Svg w={10} h={8}><rect x="1" y="1" width="8" height="6" stroke="#111" strokeWidth="2" /></Svg>
          </WindowButton>
          <WindowButton $w={47} $close aria-label="Close">
            <Svg w={9} h={8}><path d="M1 0l7 8M8 0L1 8" stroke="#111" strokeWidth="2" /></Svg>
          </WindowButton>
        </WindowButtons>
      </TitleBar>
      <Client>
        <TabRow>
          <FileTab>File</FileTab>
          {tabs.map((t) => (
            <RibbonTab key={t} $active={t === "Home"}>{t}</RibbonTab>
          ))}
          <TabTools>
            <button aria-label="Minimize ribbon"><CollapseIcon /></button>
            <button aria-label="Help"><HelpIcon /></button>
            <button aria-label="Minimize workbook"><MinIcon /></button>
            <button aria-label="Restore workbook"><RestoreIcon /></button>
            <button aria-label="Close workbook"><CloseIcon /></button>
          </TabTools>
        </TabRow>
        <RibbonBar />
        <FormulaBar>
          <FormulaField>
            <NameInput aria-label="Name box" defaultValue="B13" />
            <Tool $w={19} aria-label="Name list"><Down c="#333" w={7} /></Tool>
            <FxPanel>
              <Knob />
              <Letter $size={16} $style="fx">f<small>x</small></Letter>
            </FxPanel>
            <FormulaInput aria-label="Formula" defaultValue="1" />
          </FormulaField>
          <ExpandButton aria-label="Expand formula bar">
            <Svg w={8} h={6}><path d="M0 1l4 4 4-4" stroke="#4c5056" strokeWidth="2" /></Svg>
          </ExpandButton>
        </FormulaBar>
        <Sheet />
        <BottomRow>
          <SheetNav>
            <button aria-label="First sheet"><NavIcon d="l" bar /></button>
            <button aria-label="Previous sheet"><NavIcon d="l" /></button>
            <button aria-label="Next sheet"><NavIcon d="r" /></button>
            <button aria-label="Last sheet"><NavIcon d="r" bar /></button>
          </SheetNav>
          <SheetTab $padL={13} $padR={12}>2009-10 Q1</SheetTab>
          <SheetTab $active $padL={9} $padR={3}>SHA</SheetTab>
          <Slant l="#fff" r="#e3e6eb" />
          <SheetTab $padL={4} $padR={6}>Data quality</SheetTab>
          <Slant l="#e3e6eb" r="#e3e6eb" />
          <SheetTab $padL={7} $padR={6}>Guidance &amp; Definitions</SheetTab>
          <Slant l="#e3e6eb" r="#e3e6eb" />
          <SheetTab $padL={1} $padR={3} aria-label="Insert worksheet"><NewSheetIcon /></SheetTab>
          <Slant l="#e3e6eb" r="#dce0e8" />
          <HScroll>
            <SplitHandle $vertical />
            <ScrollButton aria-label="Scroll left"><ScrollArrow d="l" /></ScrollButton>
            <HTrack>
              <HThumb>
                <Svg w={8} h={7}><path d="M.500 0v7M2.500 0v7M4.500 0v7M6.500 0v7" stroke="#70747b" /></Svg>
              </HThumb>
            </HTrack>
            <ScrollButton aria-label="Scroll right"><ScrollArrow d="r" /></ScrollButton>
            <SplitHandle $vertical />
          </HScroll>
        </BottomRow>
        <StatusBar>
          <StatusItem $w={40}>Ready</StatusItem>
          <StatusSep />
          <Tool $w={33} aria-label="Record macro"><MacroIcon /></Tool>
          <StatusSep />
          <StatusRight>
            <StatusSep />
            <StatusItem $w={4} />
            <ViewButton $on aria-label="Normal"><ViewIcon kind="grid" /></ViewButton>
            <ViewButton aria-label="Page Layout"><ViewIcon kind="page" /></ViewButton>
            <ViewButton aria-label="Page Break Preview"><ViewIcon kind="break" /></ViewButton>
            <Tool $w={44} aria-label="Zoom level">100%</Tool>
            <button aria-label="Zoom out"><RoundIcon /></button>
            <ZoomRange type="range" aria-label="Zoom" min={0} max={100} defaultValue={51} />
            <button aria-label="Zoom in"><RoundIcon plus /></button>
            <StatusItem $w={8} />
            <Svg w={11} h={11}>
              <path d="M8 1h2v2H8zM5 5h2v2H5zM8 5h2v2H8zM2 9h2v2H2zM5 9h2v2H5zM8 9h2v2H8z" fill="#85898f" />
            </Svg>
          </StatusRight>
        </StatusBar>
      </Client>
    </Window>
  );
}
